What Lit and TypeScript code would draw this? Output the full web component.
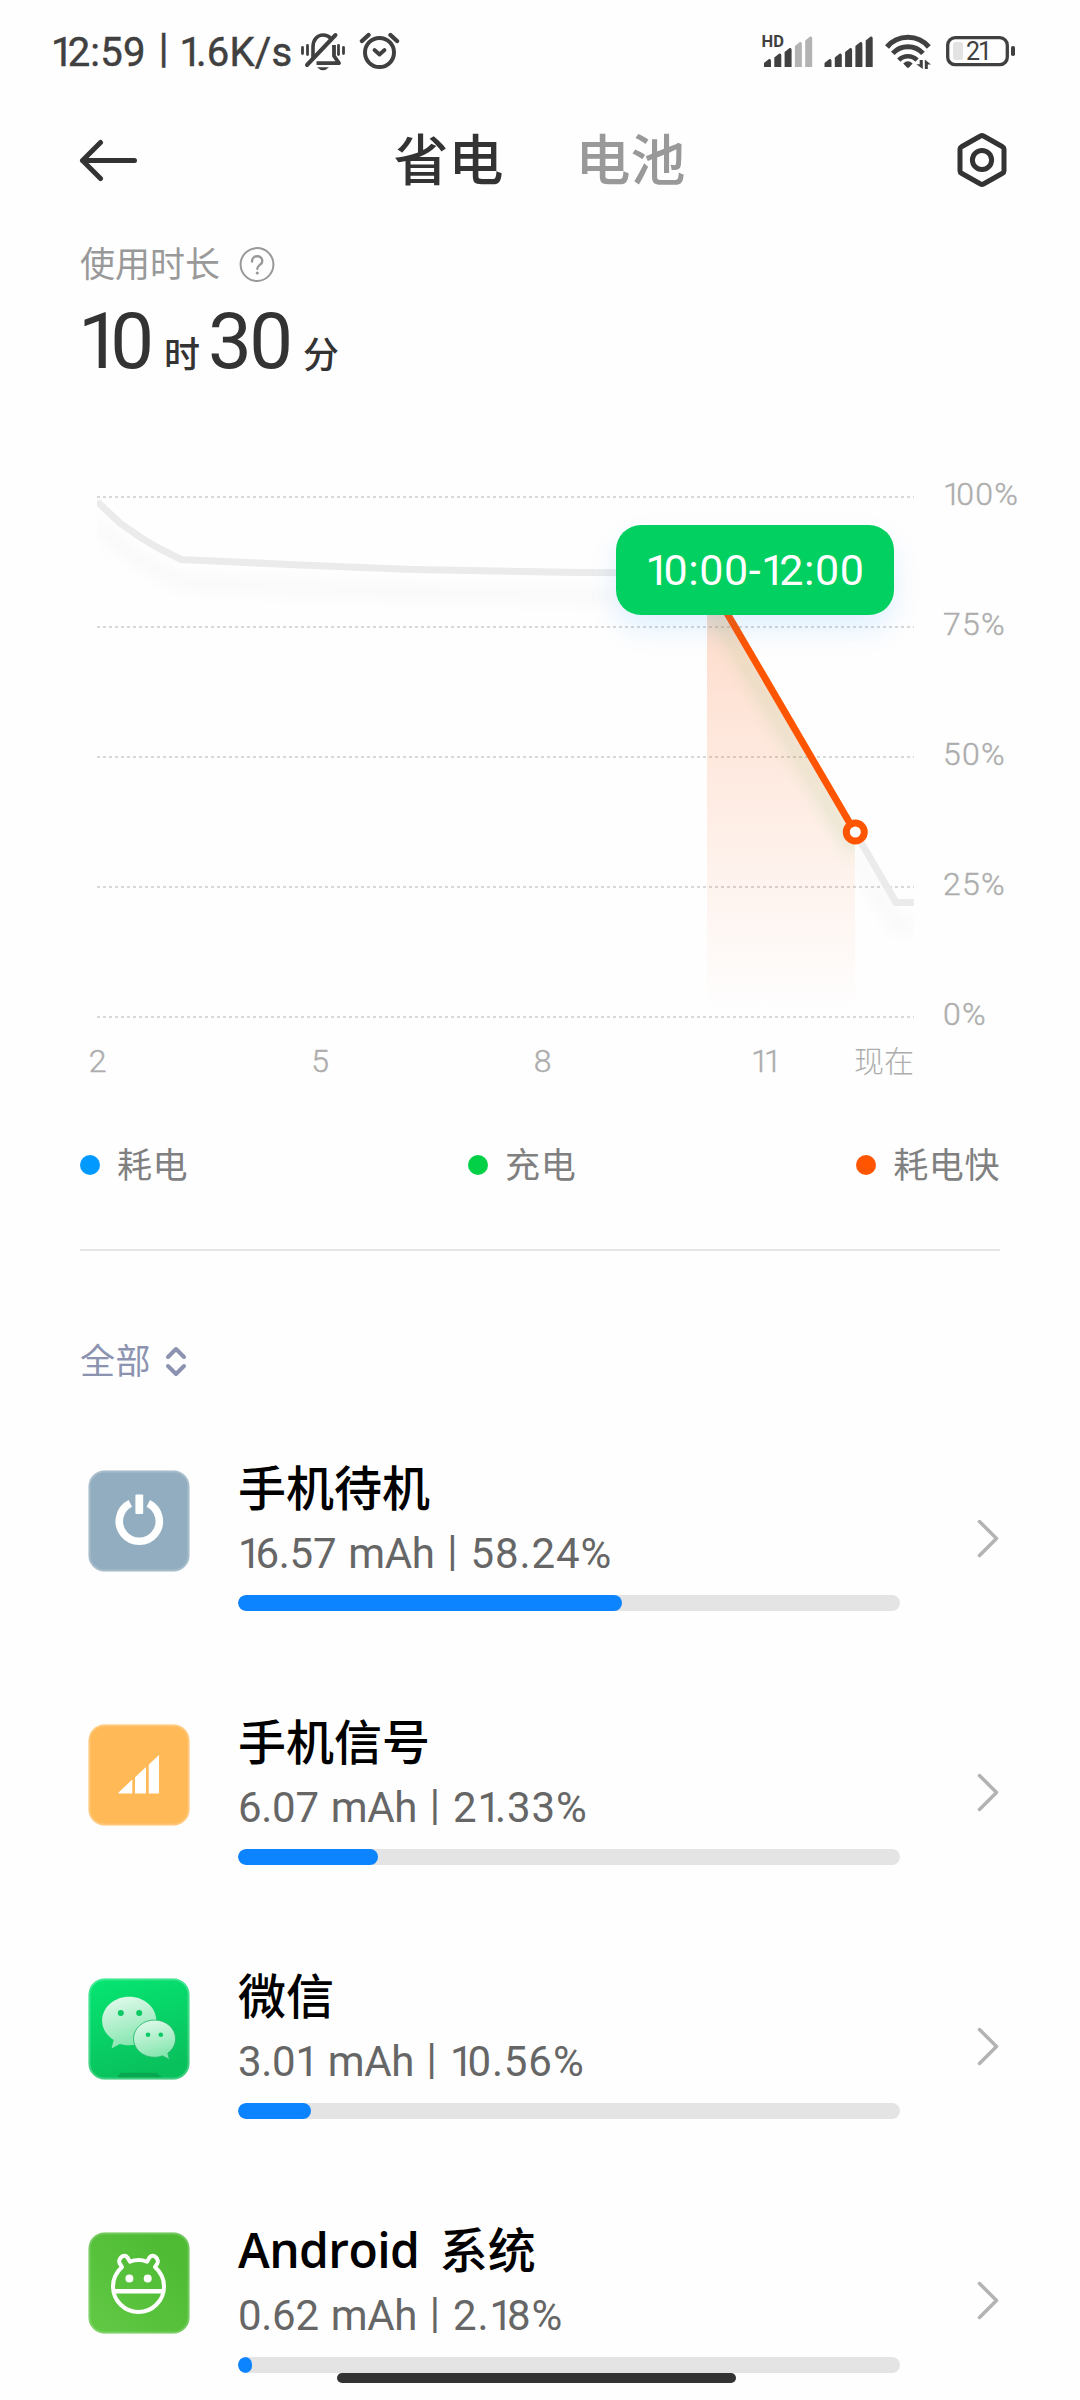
import { LitElement, html, svg, css, TemplateResult } from "lit";
import { customElement, property } from "lit/decorators.js";

/** Tightens the wide advance of the figure one inside running text. */
const tight = (text: string) =>
  text
    .split(/(1)/)
    .filter((p) => p)
    .map((p, i, all) => (p === "1" ? html`<span class=${i === all.length - 1 ? "one end" : "one"}>1</span>` : p));
const tightSvg = (text: string) =>
  text.split(/(1)/).filter((p) => p).map((p) => (p === "1" ? svg`<tspan class="one">1</tspan>` : svg`<tspan>${p}</tspan>`));

/** Sets Latin words of a name in their own face and weight. */
const mixed = (text: string) =>
  text.split(/([A-Za-z]+)/).filter((p) => p).map((p) => (/[A-Za-z]/.test(p) ? html`<span class="latin">${p}</span>` : p));

interface Usage {
  icon: string;
  name: string;
  mah: string;
  percent: string;
  fill: number;
}

const usages: Usage[] = [
  { icon: "power", name: "手机待机", mah: "16.57", percent: "58.24%", fill: 58 },
  { icon: "signal", name: "手机信号", mah: "6.07", percent: "21.33%", fill: 21.15 },
  { icon: "wechat", name: "微信", mah: "3.01", percent: "10.56%", fill: 11 },
  { icon: "android", name: "Android 系统", mah: "0.62", percent: "2.18%", fill: 2.18 },
];

const icons: Record<string, TemplateResult> = {
  power: html`<svg viewBox="0 0 102 102">
    <rect x=".5" y=".5" width="101" height="101" rx="16" fill="#91adbf" />
    <rect x="1.5" y="1.5" width="99" height="99" rx="15" fill="none" stroke="#fff" stroke-opacity=".2" stroke-width="2" />
    <path d="M42.3 33.4A20 20 0 1 0 60.3 33.4" fill="none" stroke="#fff" stroke-width="7.6" />
    <rect x="47.4" y="24.5" width="7.8" height="19.5" rx="1" fill="#fff" />
  </svg>`,
  signal: html`<svg viewBox="0 0 102 102">
    <rect x=".5" y=".5" width="101" height="101" rx="16" fill="#ffb957" />
    <rect x="1.5" y="1.5" width="99" height="99" rx="15" fill="none" stroke="#fff" stroke-opacity=".2" stroke-width="2" />
    <path d="M30.5 69.5v-1L44.3 55.5v14zM47 69.5V53.3L58 43v26.5zM60.7 69.5V40.7L71 31v38.5z" fill="#fff" />
  </svg>`,
  wechat: html`<svg viewBox="0 0 102 102">
    <defs>
      <linearGradient id="wg" x1="0" y1="0" x2=".3" y2="1">
        <stop offset="0" stop-color="#05e673" /><stop offset="1" stop-color="#09c15c" />
      </linearGradient>
      <linearGradient id="wa" x1=".3" y1="0" x2=".6" y2="1">
        <stop offset="0" stop-color="#dff9ea" /><stop offset="1" stop-color="#7fe5ab" />
      </linearGradient>
    </defs>
    <rect x=".5" y=".5" width="101" height="101" rx="16" fill="url(#wg)" />
    <rect x="1.5" y="1.5" width="99" height="99" rx="15" fill="none" stroke="#fff" stroke-opacity=".22" stroke-width="2" />
    <path d="M33 94.7H69L73.5 99.3H29z" fill="#08a851" />
    <path d="M41.2 18.7C26.2 18.7 14.1 29.3 14.1 43C14.1 50.5 18.5 57.5 25.7 62L23.5 70.5L31.8 66C34.8 66.9 38 67.3 41.2 67.3C56.2 67.3 68.4 56.7 68.4 43S56.2 18.7 41.2 18.7z" fill="url(#wa)" />
    <circle cx="32.8" cy="35" r="3" fill="#0bc964" /><circle cx="51.2" cy="35" r="3" fill="#0bc964" />
    <path d="M66.5 42C54.9 42 45.5 50.3 45.5 60.7S54.9 79.3 66.5 79.3C69.2 79.3 72 78.8 74.5 77.9L81.5 81.5L79.8 75.1C84.7 71.7 87.6 66.5 87.6 60.7C87.6 50.3 78.1 42 66.5 42z" fill="url(#wa)" stroke="#22b868" stroke-width=".9" />
    <circle cx="60" cy="56.7" r="2.3" fill="#0bc964" /><circle cx="72.8" cy="56.7" r="2.3" fill="#0bc964" />
  </svg>`,
  android: html`<svg viewBox="0 0 102 102">
    <defs>
      <linearGradient id="ag" x1="0" y1="1" x2=".8" y2=".2">
        <stop offset="0" stop-color="#62c945" /><stop offset="1" stop-color="#4fbb35" />
      </linearGradient>
    </defs>
    <rect x=".5" y=".5" width="101" height="101" rx="16" fill="url(#ag)" />
    <rect x="1.5" y="1.5" width="99" height="99" rx="15" fill="none" stroke="#fff" stroke-opacity=".18" stroke-width="2" />
    <path d="M34 35L31.8 31.6C29.3 27.5 35.5 20.7 39.5 25.5L42 29.7Q50.5 26.5 59 29.7L61.5 25.5C65.5 20.7 71.7 27.5 69.2 31.6L67 35C72.5 40 76 47 76 54.5A25.5 25.5 0 0 1 25 54.5C25 47 28.5 40 34 35z" fill="none" stroke="#fff" stroke-width="4" stroke-linejoin="round" />
    <path d="M25 59.2H76" stroke="#fff" stroke-width="4.6" />
    <circle cx="41.4" cy="46.5" r="4" fill="#fff" /><circle cx="59.7" cy="46.5" r="4" fill="#fff" />
  </svg>`,
};

const shared = css`
  .one {
    letter-spacing: -0.145em;
  }
  svg {
    display: block;
  }
`;

@customElement("status-bar")
class StatusBar extends LitElement {
  static styles = [
    shared,
    css`
      :host {
        display: flex;
        height: 104px;
        box-sizing: border-box;
        padding: 0 64px 0 51px;
        justify-content: space-between;
        align-items: center;
        color: #404040;
        font-size: 40px;
        font-weight: 400;
        line-height: 1;
      }
      .left,
      .right {
        display: flex;
        align-items: center;
      }
      .clock,
      .speed {
        padding-top: 2px;
        letter-spacing: 0.2px;
        -webkit-text-stroke: 0.5px #404040;
      }
      .bar {
        margin: -6px 11px 0 13px;
        -webkit-text-stroke: 0.5px #404040;
      }
      .bell {
        margin-left: 8px;
      }
      .alarm {
        margin-left: 13px;
      }
      .level {
        font-size: 25px;
        font-weight: 400;
      }
      .hd {
        font-size: 16.5px;
        font-weight: 700;
      }
    `,
  ];

  private bars(x: number, lit: number) {
    const tops = [60, 54.5, 49, 43, 37.5];
    return tops.map(
      (top, i) => svg`<path transform="translate(${x + i * 10.3} 0)"
        d="M0 68V${top + 4}L5 ${top}Q7 ${top - 0.5} 7 ${top + 2}V68Z" fill=${i < lit ? "#404040" : "#b3b3b3"} />`
    );
  }

  render() {
    return html`
      <div class="left">
        <span class="clock">${tight("12:59")}</span>
        <span class="bar">|</span>
        <span class="speed">${tight("1.6K/s")}</span>
        <svg class="bell" width="46" height="40" viewBox="299 33 46 40" fill="none" stroke="#404040">
          <path d="M301.5 48.5V54.5M306.5 46.5V55.5M337.5 46.5V55.5M342.5 48.5V54.5" stroke-width="2.8" stroke-linecap="round" />
          <path d="M312 59V48C312 40 317 36 322 36C325 36 328 37.3 330 39.5" stroke-width="3.6" />
          <path d="M333 46V57L338 64.2H315.5" stroke-width="3.8" stroke-linejoin="round" />
          <path d="M306 66L334.5 36" stroke-width="4" stroke-linecap="round" />
          <path d="M316 68.3H328Q325 71.3 322 71.3T316 68.3z" fill="#404040" stroke="none" />
        </svg>
        <svg class="alarm" width="42" height="40" viewBox="358 33 42 40" fill="none" stroke="#404040" stroke-linecap="round">
          <ellipse cx="378.5" cy="53.5" rx="14.5" ry="14.6" stroke-width="4" />
          <path d="M361 42L367.5 36M396 42L389.5 36" stroke-width="4.4" />
          <path d="M373.5 51L378.5 55.5L383.5 51" stroke-width="3.8" stroke-linejoin="round" />
        </svg>
      </div>
      <div class="right">
        <svg width="256" height="44" viewBox="760 31 256 44">
          <text class="hd" x="761.5" y="48" fill="#404040">HD</text>
          ${this.bars(764, 3)} ${this.bars(824.5, 5)}
          <g fill="none" stroke="#404040" stroke-width="5">
            <path d="M887 48A27.3 27.3 0 0 1 928.8 48" stroke-width="5.2" />
            <path d="M892.8 54.4A20.5 20.5 0 0 1 923 54.4" />
            <path d="M898.8 61.2A12.5 12.5 0 0 1 917 61.2" stroke-width="4.6" />
          </g>
          <path d="M903.2 64.5Q908 59.8 912.6 64.5L909 68.5Q908 69.4 907 68.5z" fill="#404040" />
          <path d="M922.8 61V70L916.3 65.2H919.7V61zM924.8 70V60.6L931 65.6H927.8V70z" fill="#404040" />
          <rect x="947.7" y="38.7" width="59.6" height="27" rx="7.5" fill="none" stroke="#404040" stroke-width="3.3" />
          <rect x="953" y="43" width="10" height="18" rx="2.5" fill="#e3e3e3" />
          <rect x="1011" y="47" width="4" height="10" rx="1.8" fill="#404040" />
          <text class="level" x="966" y="61" fill="#404040" textLength="26">21</text>
        </svg>
      </div>
    `;
  }
}

@customElement("battery-chart")
class BatteryChart extends LitElement {
  static styles = [
    shared,
    css`
      :host {
        display: block;
        position: relative;
        height: 673px;
      }
      .axis {
        font-size: 32px;
        font-weight: 300;
        fill: #adadad;
        stroke: #adadad;
        stroke-width: 0.4px;
      }
      .pct {
        letter-spacing: 1.3px;
      }
      .now {
        font-size: 30px;
        stroke: none;
      }
      .tip {
        position: absolute;
        left: 616px;
        top: 85px;
        width: 278px;
        height: 90px;
        border-radius: 25px;
        background: #02d060;
        box-shadow: 0 14px 28px rgba(0, 140, 255, 0.12);
        color: #fff;
        font-size: 43px;
        line-height: 90px;
        text-align: center;
        letter-spacing: 0.6px;
      }
    `,
  ];

  render() {
    const past = "M97 501.5L120 523L143 539L160 549L181 559.5L300 565L413 569.5L580 572.5L707 573";
    const recent = "M855 832L896 902.5H914";
    return html`
      <svg width="1080" height="673" viewBox="0 440 1080 673">
        <defs>
          <filter id="soft" filterUnits="userSpaceOnUse" x="60" y="440" width="900" height="620">
            <feGaussianBlur stdDeviation="8" />
          </filter>
          <linearGradient id="area" gradientUnits="userSpaceOnUse" x1="0" y1="573" x2="0" y2="1010">
            <stop offset="0" stop-color="#ff5500" stop-opacity=".22" />
            <stop offset="1" stop-color="#ff5500" stop-opacity="0" />
          </linearGradient>
          <clipPath id="plot"><rect x="97" y="480" width="817" height="540" /></clipPath>
          <clipPath id="range"><path d="M707 579L855 832V1016H707z" /></clipPath>
          <clipPath id="tail"><rect x="855" y="780" width="59" height="240" /></clipPath>
        </defs>
        <path d="M97 497H914M97 627H914M97 757H914M97 887H914M97 1017H914" stroke="#d8d8d8" stroke-width="2" stroke-dasharray="3 3" />
        <path d="M707 579L855 832V1012H707z" fill="url(#area)" />
        <g clip-path="url(#plot)" fill="none" stroke-width="7">
          <path d=${past} transform="translate(0 23)" stroke="#000" stroke-opacity=".042" filter="url(#soft)" />
          <g clip-path="url(#tail)">
            <path d=${recent} transform="translate(0 23)" stroke="#000" stroke-opacity=".045" filter="url(#soft)" />
          </g>
          <g clip-path="url(#range)">
            <path d="M707 579L855 832" transform="translate(0 20)" stroke="#4fae4a" stroke-opacity=".26" filter="url(#soft)" />
          </g>
          <path d=${past} stroke="#ebebeb" />
          <path d=${recent} stroke="#ebebeb" />
          <path d="M707 579L855 832" stroke="#ff5500" />
        </g>
        <circle cx="855.3" cy="832" r="9" fill="#fff" stroke="#ff5500" stroke-width="7" />
        ${["100%", "75%", "50%", "25%", "0%"].map(
          (label, i) => svg`<text class="axis pct" x="943" y=${504.7 + i * 130}>${tightSvg(label)}</text>`
        )}
        <g text-anchor="middle">
          <text class="axis" x="97.5" y="1072">2</text>
          <text class="axis" x="320" y="1072">5</text>
          <text class="axis" x="542.5" y="1072">8</text>
          <text class="axis" x="764" y="1072">${tightSvg("11")}</text>
        </g>
        <text class="axis now" x="914" y="1071.5" text-anchor="end">现在</text>
      </svg>
      <div class="tip">${tight("10:00-12:00")}</div>
    `;
  }
}

@customElement("usage-row")
class UsageRow extends LitElement {
  static styles = [
    shared,
    css`
      :host {
        display: flex;
        height: 254px;
        padding-left: 88px;
      }
      .icon {
        width: 102px;
        height: 102px;
        margin: 11px 48px 0 0;
      }
      .body {
        width: 662px;
      }
      .name {
        font-family: "Open Sans", "Noto Sans CJK SC", sans-serif;
        font-size: 48px;
        line-height: 58px;
        font-weight: 500;
        color: #000;
        word-spacing: 8px;
      }
      .latin {
        font-weight: 600;
        letter-spacing: -0.6px;
      }
      .detail {
        display: flex;
        align-items: baseline;
        height: 46px;
        margin: 14px 0 18px;
        font-size: 42px;
        line-height: 46px;
        color: #666;
      }
      .value {
        letter-spacing: -0.3px;
      }
      .value .end {
        letter-spacing: -0.08em;
      }
      .unit {
        margin-left: 12px;
        letter-spacing: -0.3px;
      }
      .bar {
        align-self: flex-start;
        margin: -3px 13px 0 12.5px;
      }
      .percent {
        letter-spacing: 0.9px;
      }
      .track {
        height: 16px;
        border-radius: 8px;
        background: #e4e4e4;
        overflow: hidden;
      }
      .fill {
        height: 16px;
        border-radius: 8px;
        background: #0d84ff;
      }
      .go {
        margin: 60px 0 0 76px;
      }
    `,
  ];

  @property({ attribute: false }) item!: Usage;

  render() {
    const u = this.item;
    return html`
      <div class="icon">${icons[u.icon]}</div>
      <div class="body">
        <div class="name">${mixed(u.name)}</div>
        <div class="detail">
          <span class="value">${tight(u.mah)}</span>
          <span class="unit">mAh</span>
          <span class="bar">|</span>
          <span class="percent">${tight(u.percent)}</span>
        </div>
        <div class="track"><div class="fill" style="width:${u.fill}%"></div></div>
      </div>
      <svg class="go" width="24" height="40" viewBox="0 0 24 40" fill="none" stroke="#b3b3b3" stroke-width="3.5" stroke-linecap="round" stroke-linejoin="round">
        <path d="M3.5 2.5L20.5 19.5L3.5 36.5" />
      </svg>
    `;
  }
}

@customElement("app-root")
class AppRoot extends LitElement {
  static styles = [
    shared,
    css`
      :host {
        display: block;
        position: relative;
        width: 1080px;
        height: 2400px;
        overflow: hidden;
        background: #fefefe;
        font-family: Roboto, "Noto Sans CJK SC", sans-serif;
      }
      .nav {
        display: flex;
        height: 112px;
        box-sizing: border-box;
        padding: 0 72px 0 79px;
        align-items: center;
        justify-content: space-between;
      }
      .tabs {
        display: flex;
        gap: 72px;
        padding: 1px 16px 0 0;
        font-size: 55px;
        font-weight: 500;
        line-height: 64px;
        color: #999;
      }
      .tabs .on {
        color: #333;
      }
      .label {
        display: flex;
        height: 44px;
        margin: 28px 0 9px 80px;
        gap: 19px;
        align-items: center;
        font-size: 35px;
        line-height: 44px;
        color: #999;
      }
      .label svg {
        margin-top: -2px;
      }
      .total {
        display: flex;
        align-items: baseline;
        height: 90px;
        margin: 0 0 53px 78px;
        line-height: 90px;
        color: #333;
      }
      .num {
        font-size: 78px;
        letter-spacing: -2.6px;
      }
      .num .one {
        letter-spacing: -0.15em;
      }
      .word {
        font-size: 36px;
        font-weight: 500;
        margin: 0 8px 0 12.5px;
      }
      .legend {
        display: flex;
        height: 52px;
        margin: 26px 80px 0;
        justify-content: space-between;
        align-items: center;
        font-size: 35px;
        line-height: 50px;
        letter-spacing: 0.6px;
        color: #808080;
      }
      .key {
        display: flex;
        align-items: center;
        gap: 17px;
      }
      .key span {
        margin: 2px 0 -2px;
      }
      .dot {
        width: 20px;
        height: 20px;
        border-radius: 50%;
      }
      .blue {
        background: #0099ff;
      }
      .green {
        background: #02d046;
      }
      .orange {
        background: #ff5500;
      }
      .rule {
        height: 2px;
        margin: 58px 80px 0;
        background: #e5e5e5;
      }
      .filter {
        display: flex;
        height: 50px;
        margin: 86px 0 72px 80px;
        gap: 13px;
        align-items: center;
        font-size: 35px;
        line-height: 50px;
        letter-spacing: 0.6px;
        color: #8c93b0;
      }
      .filter span {
        padding-top: 2px;
      }
      .home {
        position: absolute;
        left: 337px;
        top: 2373px;
        width: 399px;
        height: 10px;
        border-radius: 5px;
        background: #333;
      }
    `,
  ];

  render() {
    return html`
      <status-bar></status-bar>
      <div class="nav">
        <svg width="60" height="44" viewBox="0 0 60 44" fill="none" stroke="#333" stroke-width="5" stroke-linecap="round" stroke-linejoin="round">
          <path d="M55.5 22.5H3.5M21.5 4.5L3.5 22.5L21.5 40.5" />
        </svg>
        <div class="tabs"><span class="on">省电</span><span>电池</span></div>
        <svg width="52" height="56" viewBox="0 0 52 56" fill="none" stroke="#333" stroke-width="5" stroke-linejoin="round">
          <path d="M24.5 4Q26 3 27.5 4L46.5 14.7Q48 15.5 48 17V39Q48 40.5 46.5 41.3L27.5 52Q26 53 24.5 52L5.5 41.3Q4 40.5 4 39V17Q4 15.5 5.5 14.7z" />
          <circle cx="26" cy="28" r="9.6" />
        </svg>
      </div>
      <div class="label">
        <span>使用时长</span>
        <svg width="36" height="36" viewBox="0 0 36 36" fill="none" stroke="#999" stroke-width="2">
          <circle cx="18" cy="17.5" r="16.4" />
          <path d="M13 14.5C13 7.5 23.3 7.5 23.3 14C23.3 18 18.3 17.8 18.3 21.8" stroke-width="2.4" stroke-linecap="round" />
          <circle cx="18.3" cy="26" r="1.6" fill="#999" stroke="none" />
        </svg>
      </div>
      <div class="total">
        <span class="num">${tight("10")}</span><span class="word">时</span><span class="num">30</span><span class="word">分</span>
      </div>
      <battery-chart></battery-chart>
      <div class="legend">
        <div class="key"><i class="dot blue"></i><span>耗电</span></div>
        <div class="key"><i class="dot green"></i><span>充电</span></div>
        <div class="key"><i class="dot orange"></i><span>耗电快</span></div>
      </div>
      <div class="rule"></div>
      <div class="filter">
        <span>全部</span>
        <svg width="24" height="34" viewBox="0 0 24 34" fill="none" stroke="#8c93b0" stroke-width="4" stroke-linecap="round" stroke-linejoin="round">
          <path d="M4 12L12 4L20 12M4 21L12 29L20 21" />
        </svg>
      </div>
      ${usages.map((u) => html`<usage-row .item=${u}></usage-row>`)}
      <div class="home"></div>
    `;
  }
}
